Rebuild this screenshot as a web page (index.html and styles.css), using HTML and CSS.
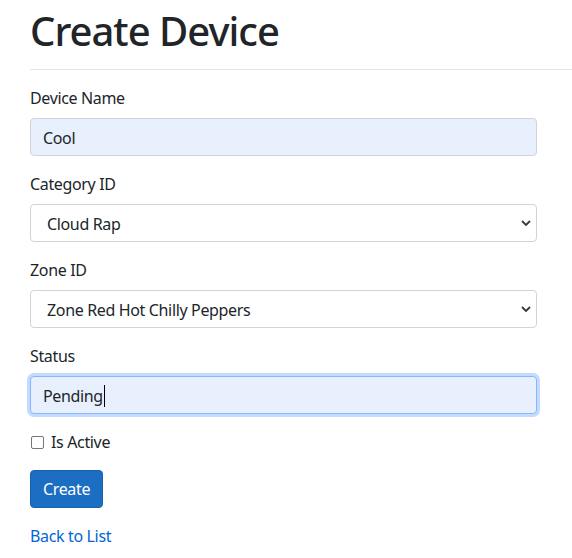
FILE: index.html
```html
<!DOCTYPE html>
<html lang="en">
<head>
<meta charset="utf-8">
<title>Create Device</title>
<link rel="stylesheet" href="styles.css">
</head>
<body>
<main class="page">
  <h1 class="title">Create Device</h1>
  <hr class="rule">
  <form class="form">
    <div class="group">
      <label class="label" for="name">Device Name</label>
      <input class="control autofill" id="name" type="text" value="Cool">
    </div>
    <div class="group">
      <label class="label" for="cat">Category ID</label>
      <select class="control select" id="cat"><option>Cloud Rap</option></select>
    </div>
    <div class="group">
      <label class="label" for="zone">Zone ID</label>
      <select class="control select" id="zone"><option>Zone Red Hot Chilly Peppers</option></select>
    </div>
    <div class="group">
      <label class="label">Status</label>
      <div class="control autofill focused"><span class="value">Pending</span><span class="caret"></span></div>
    </div>
    <div class="group check">
      <span class="box"></span>
      <span class="check-label">Is Active</span>
    </div>
    <div class="group">
      <button type="button" class="btn">Create</button>
    </div>
  </form>
  <a class="back" href="#">Back to List</a>
</main>
</body>
</html>
```
FILE: styles.css
```css
* { box-sizing: border-box; }
html, body { margin: 0; padding: 0; background: #fff; }
body {
  font-family: "Noto Sans", "Open Sans", sans-serif;
  font-size: 16px;
  line-height: 24px;
  letter-spacing: -0.35px;
  color: #212529;
}
.page { padding-left: 30px; }
.title {
  margin: 7px 0 0 0;
  font-size: 40px;
  line-height: 48px;
  font-weight: 500;
  letter-spacing: -1px;
}
.rule {
  margin: 14px 0 16px 0;
  border: 0;
  border-top: 1px solid #e5e5e5;
  height: 0;
}
.form { width: 507px; }
.group { margin-bottom: 16px; }
.label { display: block; margin-bottom: 8px; }
.control {
  display: block;
  width: 100%;
  height: 38px;
  padding: 7px 12px 5px 12px;
  font-family: inherit;
  font-size: 16px;
  line-height: 24px;
  letter-spacing: inherit;
  color: #212529;
  background: #fff;
  border: 1px solid #ced4da;
  border-radius: 4px;
  outline: none;
}
.autofill { background: #e8f0fe; }
.select {
  -webkit-appearance: none;
  appearance: none;
  padding-left: 16px;
  background-image: url("data:image/svg+xml,%3Csvg xmlns='http://www.w3.org/2000/svg' width='10' height='6' viewBox='0 0 10 6'%3E%3Cpath d='M1 1l4 4 4-4' fill='none' stroke='%23343a40' stroke-width='1.8'/%3E%3C/svg%3E");
  background-repeat: no-repeat;
  background-position: right 5px center;
  background-size: 10px 6px;
}
.focused {
  display: flex;
  align-items: center;
  border-color: #86b7fe;
  box-shadow: 0 0 0 3px rgba(13, 110, 253, 0.25);
}
.caret {
  display: inline-block;
  width: 1px;
  height: 22px;
  background: #000;
  margin-left: 1px;
}
.check { display: flex; align-items: center; gap: 7px; }
.box {
  width: 13px;
  height: 13px;
  border: 1px solid #767676;
  border-radius: 2px;
  background: #fff;
  margin-left: 1px;
}
.btn {
  display: block;
  height: 38px;
  padding: 6px 12px;
  font-family: inherit;
  font-size: 16px;
  line-height: 24px;
  letter-spacing: inherit;
  color: #fff;
  background: #1b6ec2;
  border: 1px solid #1861ac;
  border-radius: 4px;
}
.back {
  display: inline-block;
  color: #0366d6;
  text-decoration: none;
}
```
